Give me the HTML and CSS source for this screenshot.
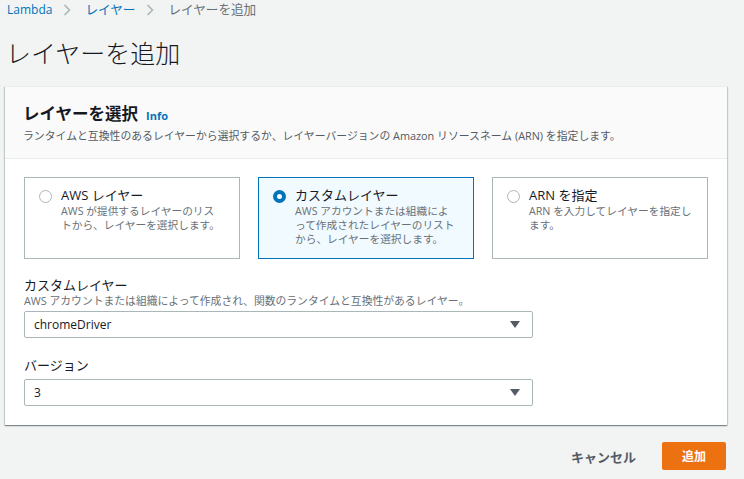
FILE: index.html
```html
<!DOCTYPE html>
<html lang="ja">
<head>
<meta charset="utf-8">
<link rel="stylesheet" href="styles.css">
</head>
<body>
<nav class="breadcrumb">
  <a class="crumb link">Lambda</a>
  <span class="sep"><svg width="8" height="12" viewBox="0 0 8 12"><path d="M1.5 1 L6.5 6 L1.5 11" fill="none" stroke="#aab7b8" stroke-width="1.6"/></svg></span>
  <a class="crumb link jp">レイヤー</a>
  <span class="sep"><svg width="8" height="12" viewBox="0 0 8 12"><path d="M1.5 1 L6.5 6 L1.5 11" fill="none" stroke="#aab7b8" stroke-width="1.6"/></svg></span>
  <span class="crumb current jp">レイヤーを追加</span>
</nav>
<h1 class="page-title">レイヤーを追加</h1>

<section class="card">
  <header class="card-header">
    <div class="card-title-row">
      <h2 class="card-title">レイヤーを選択</h2>
      <a class="info">Info</a>
    </div>
    <p class="card-desc">ランタイムと互換性のあるレイヤーから選択するか、レイヤーバージョンの Amazon リソースネーム (ARN) を指定します。</p>
  </header>
  <div class="card-body">
    <div class="tiles">
      <label class="tile">
        <span class="radio"></span>
        <span class="tile-text">
          <span class="tile-label">AWS レイヤー</span>
          <span class="tile-desc">AWS が提供するレイヤーのリス<br>トから、レイヤーを選択します。</span>
        </span>
      </label>
      <label class="tile selected">
        <span class="radio checked"></span>
        <span class="tile-text">
          <span class="tile-label">カスタムレイヤー</span>
          <span class="tile-desc">AWS アカウントまたは組織によ<br>って作成されたレイヤーのリスト<br>から、レイヤーを選択します。</span>
        </span>
      </label>
      <label class="tile">
        <span class="radio"></span>
        <span class="tile-text">
          <span class="tile-label">ARN を指定</span>
          <span class="tile-desc">ARN を入力してレイヤーを指定し<br>ます。</span>
        </span>
      </label>
    </div>

    <div class="field">
      <div class="field-label">カスタムレイヤー</div>
      <div class="field-desc">AWS アカウントまたは組織によって作成され、関数のランタイムと互換性があるレイヤー。</div>
      <div class="select"><span>chromeDriver</span><svg width="10" height="7" viewBox="0 0 10 7"><path d="M0 0 H10 L5 7 Z" fill="#545b64"/></svg></div>
    </div>
    <div class="field field2">
      <div class="field-label">バージョン</div>
      <div class="select"><span>3</span><svg width="10" height="7" viewBox="0 0 10 7"><path d="M0 0 H10 L5 7 Z" fill="#545b64"/></svg></div>
    </div>
  </div>
</section>

<div class="actions">
  <button class="btn-link">キャンセル</button>
  <button class="btn-primary">追加</button>
</div>
</body>
</html>
```

FILE: styles.css
```css
* { box-sizing: border-box; }
html, body { margin: 0; padding: 0; }
body {
  background: #f2f3f3;
  font-family: "Open Sans", "Noto Sans CJK JP", sans-serif;
  color: #16191f;
  width: 744px;
  height: 479px;
  overflow: hidden;
}
.breadcrumb {
  display: flex;
  align-items: center;
  height: 20px;
  padding-left: 7px;
  font-size: 12px;
  line-height: 20px;
}
.crumb.jp { font-size: 12.6px; }
.crumb.link { color: #0073bb; }
.crumb.current { color: #687078; }
.sep { display: flex; align-items: center; margin: 0 14px 0 11px; }
.page-title {
  margin: 17px 0 0 6px;
  font-size: 25px;
  font-weight: 300;
  line-height: 32px;
  color: #16191f;
}
.card {
  margin: 17px 0 0 5px;
  width: 722px;
  background: #fff;
  border-top: 1px solid #eaeded;
  box-shadow: 0 1px 1px 0 rgba(0,28,36,.3), 1px 1px 1px 0 rgba(0,28,36,.15), -1px 1px 1px 0 rgba(0,28,36,.15);
}
.card-header {
  background: #fafafa;
  border-bottom: 1px solid #eaeded;
  padding: 15px 19px 14px 18px;
}
.card-title-row { display: flex; align-items: baseline; gap: 8px; }
.card-title {
  margin: 0;
  font-size: 16.5px;
  font-weight: 700;
  line-height: 24px;
}
.info { color: #0073bb; font-size: 11px; font-weight: 700; }
.card-desc {
  margin: 2px 0 0 0;
  font-size: 10.85px;
  line-height: 16px;
  color: #545b64;
}
.card-body { padding: 18px 19px 19px 19px; }
.tiles { display: grid; grid-template-columns: 216px 216px 216px; gap: 18px; }
.tile {
  display: flex;
  gap: 9px;
  height: 82px;
  padding: 9px 14px;
  border: 1px solid #aab7b8;
  background: #fff;
}
.tile.selected { border-color: #0073bb; background: #f1faff; }
.radio {
  flex: none;
  width: 13px;
  height: 13px;
  margin-top: 3px;
  border: 1px solid #aab7b8;
  border-radius: 50%;
  background: #fff;
}
.radio.checked { border: 4px solid #0073bb; }
.tile-text { display: flex; flex-direction: column; }
.tile-label { font-size: 13px; line-height: 17px; color: #16191f; }
.tile-desc { font-size: 10.7px; line-height: 14px; color: #687078; white-space: nowrap; }
.field { margin-top: 17px; }
.field2 { margin-top: 18px; }
.field-label { font-size: 13px; line-height: 18px; color: #16191f; }
.field-desc { font-size: 10.8px; line-height: 14px; color: #687078; }
.field2 .field-label { margin-bottom: 5px; }
.select {
  margin-top: 3px;
  width: 509px;
  height: 27px;
  border: 1px solid #aab7b8;
  border-radius: 2px;
  background: #fff;
  display: flex;
  align-items: center;
  justify-content: space-between;
  padding: 0 12px 0 9px;
  font-size: 12px;
  color: #16191f;
}
.field2 .select { margin-top: 0; }
.actions {
  display: flex;
  justify-content: flex-end;
  align-items: center;
  gap: 26px;
  width: 726px;
  margin-top: 17px;
}
.btn-link {
  border: none;
  background: none;
  font-family: inherit;
  font-size: 13px;
  font-weight: 700;
  color: #545b64;
  padding: 0;
}
.btn-primary {
  border: none;
  border-radius: 2px;
  background: #ec7211;
  color: #fff;
  font-family: inherit;
  font-size: 12px;
  font-weight: 700;
  width: 64px;
  height: 28px;
  padding: 0;
}
```
